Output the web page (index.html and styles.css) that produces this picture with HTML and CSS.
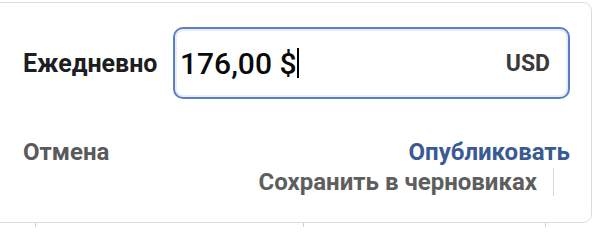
FILE: index.html
```html
<!DOCTYPE html>
<html lang="ru">
<head>
<meta charset="utf-8">
<link rel="stylesheet" href="styles.css">
</head>
<body>
<div class="card">
  <div class="budget-row">
    <span class="label">Ежедневно</span>
    <div class="field">
      <span class="value">176,00 $<span class="caret"></span></span>
      <span class="currency">USD</span>
    </div>
  </div>
  <div class="actions">
    <span class="cancel">Отмена</span>
    <div class="right-actions">
      <span class="publish">Опубликовать</span>
      <div class="draft-row">
        <span class="draft">Сохранить в черновиках</span>
        <span class="divider"></span>
      </div>
    </div>
  </div>
</div>
<div class="ticks">
  <span class="tick t1"></span>
  <span class="tick t2"></span>
  <span class="tick t3"></span>
</div>
</body>
</html>
```
FILE: styles.css
```css
html, body {
  margin: 0;
  padding: 0;
  background: #ffffff;
  font-family: Roboto, "Liberation Sans", Arial, sans-serif;
  overflow: hidden;
}
.card {
  box-sizing: border-box;
  margin: 2px 0 0 -12px;
  width: 604px;
  height: 221px;
  border: 1px solid #dcdcdc;
  border-radius: 9px;
  background: #fff;
  padding: 24px 21px 0 34px;
}
.budget-row {
  display: flex;
  align-items: center;
}
.label {
  font-weight: 700;
  font-size: 25px;
  color: #1c1e21;
  width: 150px;
}
.field {
  box-sizing: border-box;
  width: 397px;
  height: 72px;
  border: 2px solid #5b7fc4;
  border-radius: 10px;
  box-shadow: inset 0 0 0 2px #e6edf8;
  display: flex;
  align-items: center;
  justify-content: space-between;
  padding: 0 18px 0 5px;
}
.value {
  font-size: 30px;
  font-weight: 500;
  color: #0a0a0a;
  display: flex;
  align-items: center;
}
.caret {
  display: inline-block;
  width: 2px;
  height: 30px;
  background: #000;
  margin-left: 1px;
}
.currency {
  font-size: 23px;
  font-weight: 700;
  color: #3a3a3a;
}
.actions {
  display: flex;
  justify-content: space-between;
  margin-top: 39px;
}
.cancel {
  font-size: 24px;
  font-weight: 700;
  color: #5a5a5a;
}
.right-actions {
  display: flex;
  flex-direction: column;
  align-items: flex-end;
}
.publish {
  font-size: 24px;
  font-weight: 700;
  color: #3a5a94;
}
.draft-row {
  display: flex;
  align-items: center;
  margin-top: 2px;
  margin-right: 16px;
}
.draft {
  font-size: 24px;
  font-weight: 700;
  color: #5e5e5e;
}
.divider {
  width: 1px;
  height: 28px;
  background: #d6d6d6;
  margin-left: 16px;
}
.ticks {
  position: relative;
  height: 4px;
}
.tick {
  position: absolute;
  top: 0;
  width: 1px;
  height: 4px;
  background: #cfcfcf;
}
.t1 { left: 35px; }
.t2 { left: 303px; }
.t3 { left: 545px; }
```
